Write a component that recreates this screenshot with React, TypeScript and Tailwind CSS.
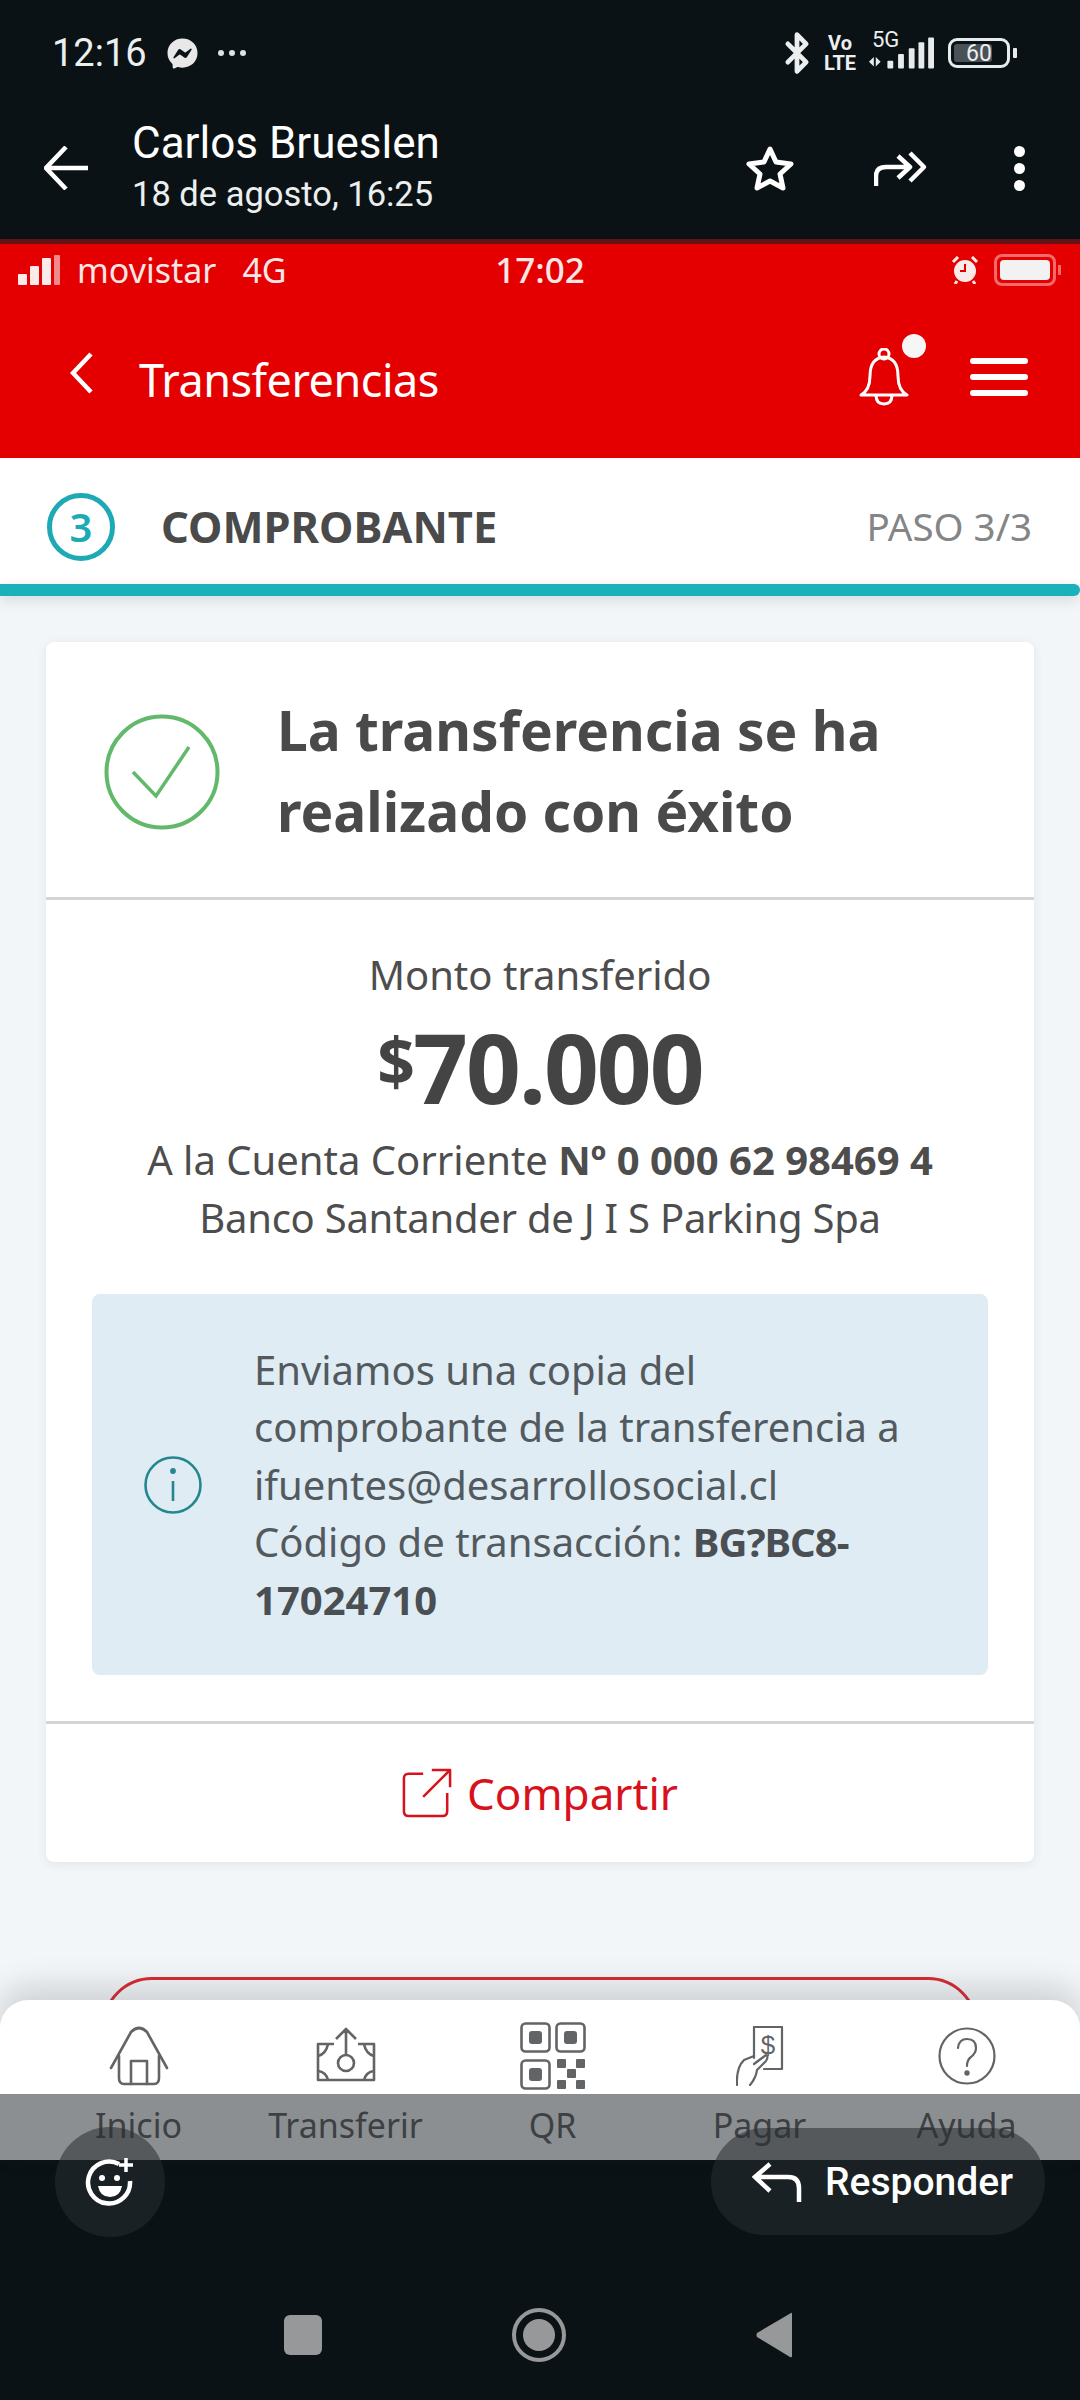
import { Bluetooth } from 'lucide-react';
import { FaFacebookMessenger } from 'react-icons/fa';

const ink = '#636466';

const HomeIcon = () => (
  <svg viewBox="0 0 60 60" className="w-[60px] h-[60px]" fill="none" stroke={ink} strokeWidth="2.6" strokeLinejoin="round" strokeLinecap="round">
    <path d="M2 42 L22 6 Q30 -2 38 6 L58 42" />
    <path d="M10 30 V52 Q10 58 15 58 H45 Q50 58 50 52 V30" />
    <path d="M22 58 V35 H38 V58" />
  </svg>
);

const TransferIcon = () => (
  <svg viewBox="0 0 60 60" className="w-[60px] h-[60px]" fill="none" stroke={ink} strokeWidth="2.6" strokeLinejoin="round">
    <path d="M30 29 V3 M20 13 L30 3 L40 13" />
    <circle cx="30" cy="37" r="8" />
    <path d="M18 18 H2 V54 H58 V18 H42" />
    <path d="M2 30 Q10 28 12 18 M58 30 Q50 28 48 18 M2 45 Q10 46 12 54 M58 45 Q50 46 48 54" />
  </svg>
);

const QrIcon = () => (
  <svg viewBox="0 0 66 68" className="w-[66px] h-[68px]" fill="none" stroke={ink} strokeWidth="2.6">
    <rect x="1.5" y="1.5" width="28" height="28" rx="4" />
    <rect x="36.5" y="1.5" width="28" height="28" rx="4" />
    <rect x="1.5" y="38.5" width="28" height="28" rx="4" />
    <g fill={ink} stroke="none">
      <rect x="9" y="9" width="13" height="13" rx="3" />
      <rect x="44" y="9" width="13" height="13" rx="3" />
      <rect x="9" y="46" width="13" height="13" rx="3" />
      <rect x="37" y="37" width="9" height="9" rx="1" />
      <rect x="56" y="37" width="9" height="9" rx="1" />
      <rect x="47" y="47" width="9" height="9" rx="1" />
      <rect x="37" y="58" width="9" height="9" rx="1" />
      <rect x="56" y="58" width="9" height="9" rx="1" />
    </g>
  </svg>
);

const PayIcon = () => (
  <svg viewBox="0 0 48 60" className="w-[48px] h-[60px]" fill="none" stroke={ink} strokeWidth="2.2" strokeLinejoin="round" strokeLinecap="round">
    <path d="M18 32 V1 H46 V43 H28" />
    <path d="M1 59 Q0 42 8 34 L18 30 M14 59 Q20 52 21 44 L30 35 Q33 30 30 29 L18 38" />
    <text x="32" y="28" textAnchor="middle" fontSize="26" fill={ink} stroke="none" fontFamily="'Liberation Sans', sans-serif">$</text>
  </svg>
);

const HelpIcon = () => (
  <svg viewBox="0 0 58 58" className="w-[58px] h-[58px]" fill="none" stroke={ink} strokeWidth="2.2" strokeLinecap="round">
    <circle cx="29" cy="29" r="27.5" />
    <path d="M20 21 Q21 12 29 12 Q38 12 38 21 Q38 26 33 30 Q29 33 29 39" />
    <circle cx="29" cy="46" r="1.6" fill={ink} />
  </svg>
);

const tabs = [
  { label: 'Inicio', icon: HomeIcon },
  { label: 'Transferir', icon: TransferIcon },
  { label: 'QR', icon: QrIcon },
  { label: 'Pagar', icon: PayIcon },
  { label: 'Ayuda', icon: HelpIcon },
];

const CarrierStatus = () => (
  <div className="h-[52px] px-[18px] flex items-center justify-between text-[#f7e6e6] text-[34px] font-['Noto_Sans',sans-serif]">
    <div className="flex items-center w-[300px]">
      <div className="flex items-end gap-[3px] h-[30px] mr-[17px]">
        <span className="w-[9px] h-[11px] bg-[#fbeaea] rounded-[1px]" />
        <span className="w-[9px] h-[19px] bg-[#fbeaea] rounded-[1px]" />
        <span className="w-[9px] h-[27px] bg-[#fbeaea] rounded-[1px]" />
        <span className="w-[6px] h-[30px] bg-[#f08a8a] rounded-[1px]" />
      </div>
      <span>movistar</span>
      <span className="ml-[26px]">4G</span>
    </div>
    <span className="font-medium text-[35px]">17:02</span>
    <div className="flex items-center justify-end w-[300px] pr-[1px]">
      <svg viewBox="0 0 28 28" className="w-[28px] h-[28px] mr-[15px]">
        <circle cx="14" cy="15" r="11" fill="#fbeaea" />
        <path d="M14 8 V15 H9" stroke="#e00000" strokeWidth="2" fill="none" />
        <path d="M2 6 L7 1 M26 6 L21 1 M6 25 L4 28 M22 25 L24 28" stroke="#fbeaea" strokeWidth="3" />
      </svg>
      <div className="w-[62px] h-[32px] rounded-[8px] border-[3px] border-[#f46a6a] p-[3px]">
        <div className="w-full h-full bg-[#f2f2f2] rounded-[4px]" />
      </div>
      <span className="w-[3px] h-[10px] ml-[2px] bg-[#f46a6a]" />
    </div>
  </div>
);

const SuccessCard = () => (
  <section className="h-[1220px] bg-white rounded-[8px] shadow-[0_2px_10px_rgba(60,80,100,0.10)] flex flex-col">
    <div className="h-[258px] shrink-0 border-b-[3px] border-[#d4d4d4] flex items-center pl-[58px]">
      <svg viewBox="0 0 116 116" className="w-[116px] h-[116px] shrink-0 mt-[5px]" fill="none" stroke="#63b96b">
        <circle cx="58" cy="58" r="55.5" strokeWidth="4" />
        <path d="M29 58 L52 82 L85 33" strokeWidth="3.5" />
      </svg>
      <h1 className="ml-[57px] text-[55px] leading-[81px] font-bold text-[#4a4a4a] whitespace-nowrap">
        La transferencia se ha
        <br />
        realizado con éxito
      </h1>
    </div>

    <div className="flex-1 flex flex-col items-center pt-[46px] text-[#4d4d4d] text-[40px]">
      <p className="leading-[58px]">Monto transferido</p>
      <p className="flex items-start font-bold text-[#444444] h-[126px] leading-[126px] text-[96px] tracking-[-2px]">
        <span className="text-[66px] leading-[112px]">$</span>
        70.000
      </p>
      <p className="leading-[58px] mt-[1px] whitespace-nowrap">
        A la Cuenta Corriente <b className="font-bold">Nº 0 000 62 98469 4</b>
      </p>
      <p className="leading-[58px] whitespace-nowrap tracking-[-0.25px]">Banco Santander de J I S Parking Spa</p>

      <div className="w-[896px] h-[381px] mt-[47px] bg-[#e0ecf3] rounded-[8px] flex items-center pl-[52px]">
        <svg viewBox="0 0 58 58" className="w-[58px] h-[58px] shrink-0" fill="none" stroke="#24878f" strokeWidth="2.6">
          <circle cx="29" cy="29" r="27.5" />
          <path d="M29 25 V45" />
          <circle cx="29" cy="15" r="1.6" fill="#24878f" />
        </svg>
        <p className="ml-[52px] text-[40px] leading-[57.6px] text-[#525a60] whitespace-nowrap">
          Enviamos una copia del
          <br />
          comprobante de la transferencia a
          <br />
          ifuentes@desarrollosocial.cl
          <br />
          Código de transacción: <b className="font-bold text-[#4a4f53] tracking-[-1px]">BG?BC8-</b>
          <br />
          <b className="font-bold text-[#4a4f53]">17024710</b>
        </p>
      </div>
    </div>

    <div className="h-[141px] shrink-0 border-t-[3px] border-[#d4d4d4] flex items-center justify-center gap-[15px] text-[#d8121c] text-[44px]">
      <svg viewBox="0 0 52 52" className="w-[50px] h-[50px]" fill="none" stroke="#d8121c" strokeWidth="2.6" strokeLinejoin="round">
        <path d="M22 6 H7 Q2 6 2 11 V45 Q2 50 7 50 H42 Q47 50 47 45 V26" />
        <path d="M22 30 L49 3 M31 2 H50 V20" />
      </svg>
      <span>Compartir</span>
    </div>
  </section>
);

export default function App() {
  return (
    <div className="relative w-[1080px] h-[2400px] overflow-hidden flex flex-col bg-[#0b1215] font-[Roboto,sans-serif]">
      {/* mail app chrome */}
      <header className="h-[239px] shrink-0 text-[#eceff0]">
        <div className="h-[106px] pl-[52px] pr-[63px] flex items-center justify-between">
          <div className="flex items-center">
            <span className="text-[38px]">12:16</span>
            <FaFacebookMessenger className="w-[31px] h-[31px] ml-[20px] text-[#e8e8e8]" />
            <div className="flex gap-[5px] ml-[20px]">
              <span className="w-[6px] h-[6px] rounded-full bg-[#dfe2e3]" />
              <span className="w-[6px] h-[6px] rounded-full bg-[#dfe2e3]" />
              <span className="w-[6px] h-[6px] rounded-full bg-[#dfe2e3]" />
            </div>
          </div>
          <div className="flex items-center">
            <Bluetooth className="w-[44px] h-[44px]" strokeWidth={2.6} />
            <div className="ml-[3px] w-[36px] text-[20px] leading-[20px] font-bold text-center">
              <div>Vo</div>
              <div>LTE</div>
            </div>
            <div className="ml-[10px] relative w-[66px] h-[34px]">
              <span className="absolute left-[4px] -top-[8px] text-[22px] leading-[24px]">5G</span>
              <svg viewBox="0 0 68 34" className="w-[66px] h-[34px]" fill="#e8ebec">
                <path d="M1 26 L6 21 V31 Z M8 21 L13 26 L8 31 Z" />
                <rect x="20" y="25" width="6" height="8" rx="1" />
                <rect x="31" y="18" width="6" height="15" rx="1" />
                <rect x="42" y="12" width="6" height="21" rx="1" />
                <rect x="52" y="6" width="6" height="27" rx="1" />
                <rect x="62" y="1" width="6" height="32" rx="1" />
              </svg>
            </div>
            <div className="ml-[14px] w-[62px] h-[30px] rounded-[9px] border-[3px] border-[#e8ebec] p-[3px] relative">
              <div className="w-[38px] h-full rounded-[3px] bg-[#4b5257]" />
              <span className="absolute inset-0 flex items-center justify-center text-[23px] leading-none">60</span>
            </div>
            <span className="w-[4px] h-[10px] ml-[3px] rounded-[1px] bg-[#e8ebec]" />
          </div>
        </div>

        <div className="flex items-center h-[112px] mt-[6px] pl-[44px] pr-[56px]">
          <svg viewBox="0 0 44 44" className="w-[44px] h-[44px]" fill="none" stroke="#fff" strokeWidth="4.5">
            <path d="M44 22 H3 M22 1 L2 22 L22 43" />
          </svg>
          <div className="ml-[44px] flex-1">
            <p className="text-[44px] leading-[52px] text-white -mt-[3px] mb-[3px]">Carlos Brueslen</p>
            <p className="text-[34.5px] leading-[44px] text-[#eceff0]">18 de agosto, 16:25</p>
          </div>
          <svg viewBox="0 0 48 46" className="w-[48px] h-[46px]" fill="none" stroke="#fff" strokeWidth="5" strokeLinejoin="round">
            <path d="M24 4 L30 17 L45 19 L34 29 L37 43 L24 36 L11 43 L14 29 L3 19 L18 17 Z" />
          </svg>
          <svg viewBox="0 0 56 36" className="ml-[80px] w-[56px] h-[36px]" fill="none" stroke="#fff" strokeWidth="4.5" strokeLinejoin="round">
            <path d="M2 36 V26 Q2 17 12 17 H34 M24 6 L36 17 L24 28" />
            <path d="M36 3 L50 17 L36 31" />
          </svg>
          <div className="ml-[84px] flex flex-col gap-[6px] mr-[-1px]">
            <span className="w-[11px] h-[11px] rounded-full bg-white" />
            <span className="w-[11px] h-[11px] rounded-full bg-white" />
            <span className="w-[11px] h-[11px] rounded-full bg-white" />
          </div>
        </div>
      </header>

      {/* attached screenshot of the bank app */}
      <main className="relative h-[1921px] shrink-0 flex flex-col border-t-[5px] border-[#651317] bg-[#f3f6f8] font-['Noto_Sans',sans-serif]">
        <div className="h-[214px] shrink-0 bg-[#e40000]">
          <CarrierStatus />
          <div className="flex items-center h-[162px] pl-[70px] pr-[52px] text-white">
            <svg viewBox="0 0 24 42" className="w-[24px] h-[42px] -mt-[8px]" fill="none" stroke="#fff" strokeWidth="4.5">
              <path d="M21 2 L3 21 L21 40" />
            </svg>
            <span className="ml-[45px] text-[45px] tracking-[-0.5px] flex-1 mt-[6px]">Transferencias</span>
            <div className="relative w-[50px] h-[58px]">
              <svg viewBox="0 0 50 58" className="w-[50px] h-[58px]" fill="none" stroke="#fff" strokeWidth="3" strokeLinejoin="round">
                <path d="M2 47 Q11 42 11 28 Q11 10 25 9 Q39 10 39 28 Q39 42 48 47 Z" />
                <circle cx="25" cy="6" r="5" />
                <path d="M17 47 Q17 56 25 56 Q33 56 33 47" />
              </svg>
              <span className="absolute -top-[14px] -right-[17px] w-[24px] h-[24px] rounded-full bg-[#f6f6f6]" />
            </div>
            <div className="ml-[61px] flex flex-col gap-[10px]">
              <span className="w-[58px] h-[6px] rounded-full bg-white" />
              <span className="w-[58px] h-[6px] rounded-full bg-white" />
              <span className="w-[58px] h-[6px] rounded-full bg-white" />
            </div>
          </div>
        </div>

        <div className="h-[126px] shrink-0 bg-white flex items-center pt-[12px] pl-[47px] pr-[48px]">
          <div className="w-[68px] h-[68px] rounded-full border-[5px] border-[#1eaab4] flex items-center justify-center text-[40px] font-semibold text-[#1eaab4]">
            3
          </div>
          <h2 className="ml-[46px] flex-1 text-[43.5px] font-bold text-[#4a4a4a]">COMPROBANTE</h2>
          <span className="text-[38.5px] text-[#858585]">PASO 3/3</span>
        </div>
        <div className="relative h-[12px] shrink-0 rounded-r-full bg-[#1bb1ba] shadow-[0_4px_14px_rgba(0,0,0,0.12)]" />

        <div className="flex-1 min-h-0 overflow-hidden px-[46px] pt-[46px]">
          <SuccessCard />
          <div className="mx-[56px] mt-[115px] h-[100px] rounded-t-[50px] border-[3px] border-[#d7282f]" />
        </div>

        <nav className="relative h-[160px] shrink-0 bg-white rounded-t-[28px] shadow-[0_-14px_30px_rgba(60,70,80,0.2)] grid grid-cols-5 pl-[35px] pr-[10px] pt-[19px]">
          {tabs.map((tab) => {
            const Icon = tab.icon;
            return (
              <div key={tab.label} className="flex flex-col items-center">
                <div className="h-[74px] flex items-center justify-center">
                  <Icon />
                </div>
                <span className="mt-[10px] text-[34px] leading-[44px] text-[#6a6b6d]">{tab.label}</span>
              </div>
            );
          })}
        </nav>

        {/* message-view scrim over the end of the attachment */}
        <div className="absolute inset-x-0 bottom-0 h-[66px] bg-[#0b1215]/47" />
      </main>

      {/* floating message actions */}
      <button className="absolute left-[55px] top-[2127px] w-[110px] h-[110px] rounded-full bg-[#282e32]/55 flex items-center justify-center">
        <svg viewBox="0 0 50 50" className="w-[50px] h-[50px]" fill="none" stroke="#fff" strokeWidth="4.5">
          <path d="M34 7 A21 21 0 1 0 45 24" />
          <path d="M41 1 V15 M34 8 H48" strokeWidth="3.5" />
          <circle cx="17" cy="21" r="3" fill="#fff" stroke="none" />
          <circle cx="32" cy="21" r="3" fill="#fff" stroke="none" />
          <path d="M13 29 H37 Q35 40 25 40 Q15 40 13 29 Z" fill="#fff" stroke="none" />
        </svg>
      </button>
      <button className="absolute left-[711px] top-[2128px] w-[334px] h-[107px] rounded-full bg-[#282e32]/55 flex items-center pl-[41px] text-white">
        <svg viewBox="0 0 50 40" className="w-[50px] h-[40px]" fill="none" stroke="#fff" strokeWidth="4.5">
          <path d="M18 2 L3 15 L18 29 M3 15 H36 Q47 15 47 26 V40" />
        </svg>
        <span className="ml-[23px] text-[39px] font-medium mt-[2px]">Responder</span>
      </button>

      {/* system navigation */}
      <footer className="flex-1 flex items-center justify-center pt-[110px] pr-[4px]">
        <span className="w-[38px] h-[40px] rounded-[6px] bg-[#979899]" />
        <div className="ml-[190px] w-[54px] h-[54px] rounded-full border-[4px] border-[#979899] flex items-center justify-center">
          <span className="w-[32px] h-[32px] rounded-full bg-[#979899]" />
        </div>
        <svg viewBox="0 0 36 46" className="ml-[190px] w-[36px] h-[46px]" fill="#979899">
          <path d="M35 1 Q36 0 36 2 V44 Q36 46 34 45 L1 25 Q0 23 1 21 Z" />
        </svg>
      </footer>
    </div>
  );
}
